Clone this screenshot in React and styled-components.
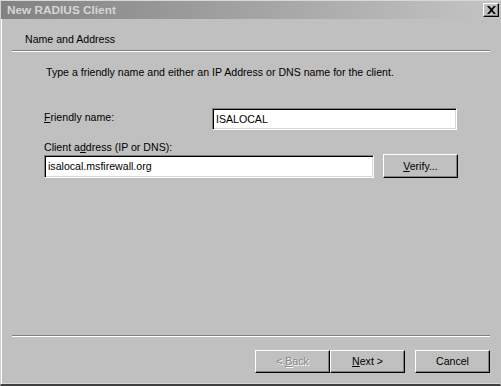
import React from "react";
import styled, { createGlobalStyle } from "styled-components";

const Global = createGlobalStyle`
  html, body { margin: 0; padding: 0; background: #c0c0c0; }
  body { font-family: "Liberation Sans", Arial, sans-serif; font-size: 10.6px; color: #000; }
  * { box-sizing: border-box; }
`;

const Window = styled.div`
  width: 501px;
  height: 386px;
  background: #c0c0c0;
  display: flex;
  flex-direction: column;
  border-top: 1px solid #d8d8d8;
  border-left: 1px solid #d0d0d0;
  border-right: 1px solid #c0c0c0;
  border-bottom: 2px solid #404040;
  box-shadow: inset 1px 0 0 #ffffff, inset 0 -1px 0 #d8d8d8;
`;

const TitleBar = styled.div`
  height: 18px;
  flex: none;
  display: flex;
  align-items: center;
  justify-content: space-between;
  padding: 0 1px 0 6px;
  background: linear-gradient(to right, #828282, #c4c4c4);
`;

const Title = styled.span`
  font-family: "Liberation Sans", Arial, sans-serif;
  font-weight: 700;
  font-size: 11.8px;
  color: #d6d6d6;
`;

const CloseButton = styled.div`
  width: 16px;
  height: 14px;
  background: #c0c0c0;
  border-top: 1px solid #ffffff;
  border-left: 1px solid #ffffff;
  border-right: 1px solid #000;
  border-bottom: 1px solid #000;
  box-shadow: inset -1px -1px 0 #808080;
  display: flex;
  align-items: center;
  justify-content: center;
`;

const Header = styled.div`
  height: 31px;
  flex: none;
  padding: 14px 0 0 24px;
  line-height: 13px;
`;

const Separator = styled.div`
  flex: none;
  height: 2px;
  margin: 0 10px 0 11px;
  border-top: 1px solid #808080;
  border-bottom: 1px solid #ffffff;
`;

const Body = styled.div`
  flex: 1;
  display: flex;
  flex-direction: column;
  padding: 0 0 0 43px;
`;

const Instruction = styled.div`
  margin: 14px 0 0 2px;
  line-height: 13px;
`;

const FieldRow = styled.div`
  display: flex;
  align-items: ${(p) => (p.$inline ? "flex-start" : "flex-end")};
  margin-top: ${(p) => p.$top}px;
  gap: ${(p) => p.$gap || 0}px;
`;

const Label = styled.label`
  display: block;
  line-height: 13px;
  width: ${(p) => (p.$width ? `${p.$width}px` : "auto")};
  padding-top: ${(p) => p.$pad || 0}px;
  flex: none;
`;

const StackLabel = styled(Label)`
  margin-top: 11px;
`;

const TextField = styled.div`
  width: ${(p) => p.$width}px;
  height: ${(p) => p.$height}px;
  background: #ffffff;
  border-top: 1px solid #808080;
  border-left: 1px solid #808080;
  border-right: 1px solid #ffffff;
  border-bottom: 1px solid #ffffff;
  box-shadow: inset 1px 1px 0 #000, inset -1px -1px 0 #d8d8d8;
  padding: 0 0 0 3px;
  display: flex;
  align-items: center;
  line-height: 13px;
  flex: none;
`;

const Button = styled.div`
  width: 75px;
  height: ${(p) => p.$height || 23}px;
  background: #c0c0c0;
  border-top: 1px solid #ffffff;
  border-left: 1px solid #ffffff;
  border-right: 1px solid #000;
  border-bottom: 1px solid #000;
  box-shadow: inset -1px -1px 0 #808080;
  display: flex;
  align-items: center;
  justify-content: center;
  line-height: 13px;
  flex: none;
  color: ${(p) => (p.$disabled ? "#858585" : "#000")};
  text-shadow: ${(p) => (p.$disabled ? "1px 1px 0 #ffffff" : "none")};
`;

const Accel = styled.span`
  text-decoration: underline;
  text-underline-offset: 1px;
`;

const Spacer = styled.div`
  flex: 1;
`;

const ButtonRow = styled.div`
  flex: none;
  display: flex;
  justify-content: flex-end;
  padding: 13px 10px 11px 0;
`;

const ButtonGap = styled.div`
  width: 10px;
  flex: none;
`;

export default function App() {
  return (
    <>
      <Global />
      <Window>
        <TitleBar>
          <Title>New RADIUS Client</Title>
          <CloseButton>
            <svg width="9" height="8" viewBox="0 0 9 8">
              <path d="M0 0h2.2l2.3 2.6L6.8 0H9L5.6 4 9 8H6.8L4.5 5.4 2.2 8H0l3.4-4z" fill="#000" />
            </svg>
          </CloseButton>
        </TitleBar>
        <Header>Name and Address</Header>
        <Separator />
        <Body>
          <Instruction>
            Type a friendly name and either an IP Address or DNS name for the client.
          </Instruction>
          <FieldRow $inline $top={29}>
            <Label $width={168} $pad={3}>
              <Accel>F</Accel>riendly name:
            </Label>
            <TextField $width={245} $height={22}>ISALOCAL</TextField>
          </FieldRow>
          <StackLabel>
            Client a<Accel>d</Accel>dress (IP or DNS):
          </StackLabel>
          <FieldRow $top={0} $gap={9}>
            <TextField $width={330} $height={23}>isalocal.msfirewall.org</TextField>
            <Button $height={24}>
              <span>
                <Accel>V</Accel>erify...
              </span>
            </Button>
          </FieldRow>
          <Spacer />
        </Body>
        <Separator />
        <ButtonRow>
          <Button $disabled>
            <span>
              &lt; <Accel>B</Accel>ack
            </span>
          </Button>
          <Button>
            <span>
              <Accel>N</Accel>ext &gt;
            </span>
          </Button>
          <ButtonGap />
          <Button>Cancel</Button>
        </ButtonRow>
      </Window>
    </>
  );
}
